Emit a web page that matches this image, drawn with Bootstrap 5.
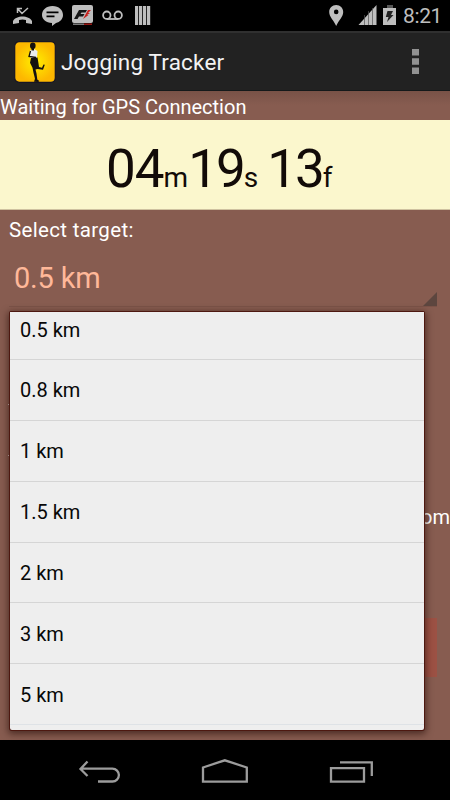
<!DOCTYPE html>
<html lang="en">
<head>
<meta charset="utf-8">
<meta name="viewport" content="width=device-width, initial-scale=1">
<title>Jogging Tracker</title>
<link href="https://cdn.jsdelivr.net/npm/bootstrap@5.3.0/dist/css/bootstrap.min.css" rel="stylesheet">
<style>
body { font-family: Roboto, "Liberation Sans", sans-serif; background: #000; line-height: 1; }
.phone { width: 450px; height: 800px; background: #875c50; }
.status { height: 31px; background: #000; color: #bebebe; }
.clock { font-size: 21px; letter-spacing: -.4px; padding: 1px 8px 0 5px; }
.appbar { height: 60px; background: #222; border-top: 2px solid #303030; border-bottom: 1px solid #14191a; padding: 0 31px 0 14px; }
.app-title { font-size: 22.5px; color: #f3f3f3; letter-spacing: .17px; padding-left: 5px; padding-top: 2px; }
.gps { height: 29px; font-size: 20px; color: #fff; padding-top: 6px; background: linear-gradient(#785247, #875c50 14px); }
.timer { height: 90px; background: #fbf7cd; color: #120b08; border-bottom: 1px solid #cfc2a0; padding-left: 106px; padding-top: 24px; }
.digits { font-size: 53px; line-height: 50px; letter-spacing: -2px; }
.minutes { letter-spacing: -1px; }
.frames { margin-left: 9px; }
.unit { font-size: 28px; }
.content-area { height: 530px; }
.select-label { font-size: 20.5px; color: #fff; letter-spacing: .33px; padding: 10px 0 0 9px; height: 30px; }
.spinner-field { height: 57px; margin: 10px 13px 0 9px; padding: 14px 0 0 5px; font-size: 29px; letter-spacing: -.2px; color: #ffb899; border-bottom: 1px solid #7b5348; }
.corner { width: 14px; height: 14px; right: 0; bottom: 0; background: #5d463f; clip-path: polygon(100% 0, 100% 100%, 0 100%); }
.popup { left: 10px; top: 102px; width: 414px; height: 418px; background: #eee; border-radius: 1px 1px 2px 2px; box-shadow: 0 0 0 1px #4d1810, 0 2px 7px 2px rgba(35,12,6,.6); }
.popup .list-group { margin-top: -12.8px; }
.popup .list-group-item { height: 60.83px; background: #eee; color: #080808; border-color: #d5d5d5; font-size: 20px; padding: 1px 10px 0; }
.peek-text { right: 0; top: 297px; font-size: 20px; color: #fff; }
.peek-button { left: 20px; top: 408px; width: 417px; height: 59px; background: #9c5144; }
.peek-dot { left: 8px; width: 3px; height: 1px; background: #d9c5bf; }
.navkeys { height: 60px; background: #000; }
</style>
<script src="https://cdn.jsdelivr.net/npm/bootstrap@5.3.0/dist/js/bootstrap.bundle.min.js"></script>
</head>
<body class="overflow-hidden">
<div class="phone d-flex flex-column overflow-hidden">
  <div class="status d-flex justify-content-between align-items-center flex-shrink-0">
    <svg width="160" height="31" viewBox="0 0 160 31" fill="#bebebe">
      <path d="M13 21c3-6 16-6 19 0v3l-6-1v-3q-3.500-1-7 0v3l-6 1z"/>
      <path d="M17.500 13V8.500H22M18 9l4 4.500 6-5.500" fill="none" stroke="#bebebe" stroke-width="1.500"/>
      <path fill-rule="evenodd" d="M52.500 6C59 6 63 10 63 15c0 4-3 7-7 8l-4 3v-3c-6 0-10-4-10-8 0-5 4-9 10.500-9zM46.500 11.500v1.800h12v-1.800zM46.500 15.500v1.800h8v-1.800z"/>
      <rect x="72" y="5" width="21" height="18" rx="2"/>
      <path d="M74 19L79 10h8l-1.500 2.500h-4L80.500 14h4L83 16.500h-4L77.500 19z" fill="#151515"/>
      <path d="M83 19l5-9h3l-3 3h2l-3 2h1.500z" fill="#c7201c"/>
      <path d="M73 24.200h11" stroke="#888" stroke-width="1.400"/><path d="M84 24.200h8" stroke="#a51915" stroke-width="1.400"/>
      <g fill="none" stroke="#bebebe" stroke-width="1.800"><circle cx="106.800" cy="15.200" r="3.700"/><circle cx="118.200" cy="15.200" r="3.700"/><path d="M106.800 19h11.400"/></g>
      <path d="M135 6h3.200v19H135zM139 6h3.200v19H139zM143 6h3.200v19H143zM147 6h3.200v19H147z"/>
    </svg>
    <div class="d-flex align-items-center">
      <svg width="73" height="31" viewBox="325 0 73 31" fill="#bebebe">
        <path fill-rule="evenodd" d="M336.200 5c4 0 7 3 7 7 0 5-4.500 8-7 14-2.500-6-7-9-7-14 0-4 3-7 7-7zm0 4.600a2.300 2.300 0 1 0 0 4.600 2.300 2.300 0 0 0 0-4.600z"/>
        <path d="M358.500 25L376.500 5v20z"/>
        <path d="M364.500 15v10M368.500 11v14M372.500 8v17" stroke="#555" stroke-width=".7"/>
        <path d="M387 5h6v3h-6z" fill="#555"/><path d="M383 8h13v17h-13z"/>
        <path d="M387.500 11h5.500l-2 4h2.500l-6.500 7 1.500-5h-2.700z" fill="#222"/>
      </svg>
      <span class="clock">8:21</span>
    </div>
  </div>

  <header class="appbar d-flex align-items-center flex-shrink-0">
    <svg width="42" height="42" viewBox="0 0 42 42">
      <defs><radialGradient id="sun"><stop stop-color="#fff000"/><stop offset="1" stop-color="#fdb700"/></radialGradient></defs>
      <rect x=".7" y=".7" width="40.600" height="40.600" rx="4.500" fill="url(#sun)" stroke="#171525" stroke-width="1.200"/>
      <path d="M16 9.500l4-1.500 3.500 2-.5 7-6.500.5-.5-3z" fill="#e9ecee"/>
      <g fill="#15120f"><ellipse cx="18.800" cy="4.800" rx="2.800" ry="3.200"/>
      <path d="M17.500 7h2.500v2.500h-2.500zM17 17l6.500-.5 1 6 .5 3.500 3 .8 1.500-3.300 1.300.3-1.800 5-5.500-.8-2 .5 1 4 .8 6 2 1.500-1 1-4.300-.3 1-3-1.500-6-1-5-2.500-5z"/></g>
      <path d="M16.500 10l-1.500 5.500 7 1" fill="none" stroke="#15120f" stroke-width="1.300"/>
    </svg>
    <div class="app-title flex-grow-1">Jogging Tracker</div>
    <svg width="7" height="27" viewBox="0 0 7 27" fill="#929292"><path d="M0 1h7v6.500H0zM0 10.200h7v6.500H0zM0 19.500h7V26H0z"/></svg>
  </header>

  <div class="gps flex-shrink-0">Waiting for GPS Connection</div>
  <div class="timer d-flex align-items-baseline flex-shrink-0">
    <span class="digits minutes">04</span><span class="unit">m</span><span class="digits">19</span><span class="unit">s</span><span class="digits frames">13</span><span class="unit">f</span>
  </div>

  <main class="content-area position-relative flex-shrink-0">
    <div class="select-label">Select target:</div>
    <div class="spinner-field position-relative">0.5 km<span class="corner position-absolute"></span></div>
    <span class="peek-dot position-absolute" style="top:194px"></span>
    <span class="peek-dot position-absolute" style="top:245px"></span>
    <span class="peek-text position-absolute">om</span>
    <div class="peek-button position-absolute"></div>
    <div class="popup position-absolute">
      <div class="h-100 overflow-hidden">
        <ul class="list-group list-group-flush">
          <li class="list-group-item d-flex align-items-center">0.5 km</li>
          <li class="list-group-item d-flex align-items-center">0.8 km</li>
          <li class="list-group-item d-flex align-items-center">1 km</li>
          <li class="list-group-item d-flex align-items-center">1.5 km</li>
          <li class="list-group-item d-flex align-items-center">2 km</li>
          <li class="list-group-item d-flex align-items-center">3 km</li>
          <li class="list-group-item d-flex align-items-center border-bottom">5 km</li>
        </ul>
      </div>
    </div>
  </main>

  <nav class="navkeys flex-shrink-0">
    <svg width="450" height="60" viewBox="0 740 450 60" fill="none" stroke="#9c9c9c" stroke-width="2.300">
      <path d="M87.500 761.500l-7 7.500 7 7M81 768.700h31.500a6.400 6.400 0 0 1 0 12.800H98"/>
      <path d="M203 781.700V767.500l21.800-7.200 22 7.200v14.200z"/>
      <path d="M331 768.200h33v13.500h-33zM340 762.300h31.800V776"/>
    </svg>
  </nav>
</div>
</body>
</html>
